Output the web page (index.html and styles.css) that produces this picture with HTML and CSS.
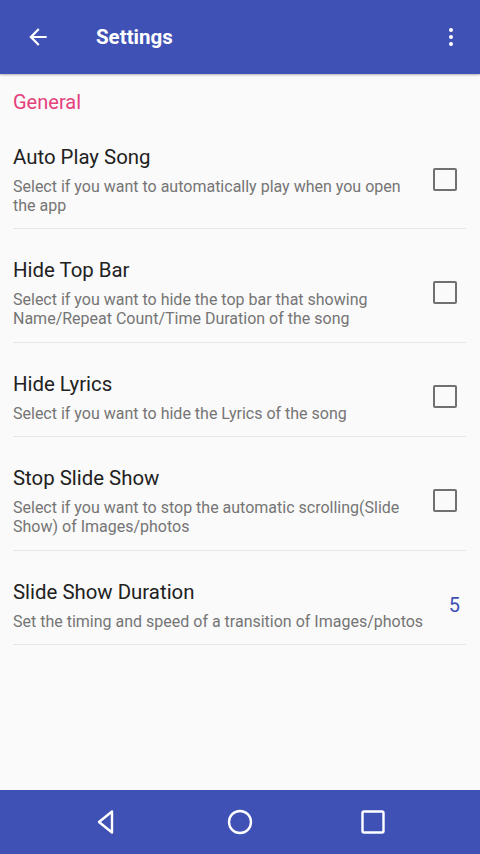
FILE: index.html
```html
<!DOCTYPE html>
<html lang="en">
<head>
  <meta charset="UTF-8">
  <title>Settings</title>
  <link rel="stylesheet" href="styles.css">
</head>
<body>
  <div class="screen">
    <!-- top bar -->
    <div class="toolbar">
      <svg class="back" width="24" height="24" viewBox="0 0 24 24">
        <path d="M20 11H7.83l5.59-5.59L12 4l-8 8 8 8 1.41-1.41L7.83 13H20v-2z" fill="#fff"/>
      </svg>
      <div class="toolbar-title">Settings</div>
      <svg class="more" width="24" height="24" viewBox="0 0 24 24">
        <circle cx="12" cy="5" r="2" fill="#fff"/>
        <circle cx="12" cy="12" r="2" fill="#fff"/>
        <circle cx="12" cy="19" r="2" fill="#fff"/>
      </svg>
    </div>

    <div class="content">
      <div class="category">General</div>

      <div class="pref">
        <div class="pref-text">
          <div class="pref-title">Auto Play Song</div>
          <div class="pref-summary">Select if you want to automatically play when you open the app</div>
        </div>
        <div class="pref-widget"><span class="checkbox"></span></div>
      </div>

      <div class="pref">
        <div class="pref-text">
          <div class="pref-title">Hide Top Bar</div>
          <div class="pref-summary">Select if you want to hide the top bar that showing Name/Repeat Count/Time Duration of the song</div>
        </div>
        <div class="pref-widget"><span class="checkbox"></span></div>
      </div>

      <div class="pref">
        <div class="pref-text">
          <div class="pref-title">Hide Lyrics</div>
          <div class="pref-summary">Select if you want to hide the Lyrics of the song</div>
        </div>
        <div class="pref-widget"><span class="checkbox"></span></div>
      </div>

      <div class="pref">
        <div class="pref-text">
          <div class="pref-title">Stop Slide Show</div>
          <div class="pref-summary">Select if you want to stop the automatic scrolling(Slide Show) of Images/photos</div>
        </div>
        <div class="pref-widget"><span class="checkbox"></span></div>
      </div>

      <div class="pref">
        <div class="pref-text">
          <div class="pref-title">Slide Show Duration</div>
          <div class="pref-summary">Set the timing and speed of a transition of Images/photos</div>
        </div>
        <div class="pref-value">5</div>
      </div>
    </div>

    <!-- navigation bar -->
    <div class="navbar">
      <svg width="28" height="28" viewBox="0 0 28 28">
        <path d="M19 3.5 L6 14 L19 24.5 Z" fill="none" stroke="#fff" stroke-width="2.4" stroke-linejoin="round"/>
      </svg>
      <svg width="28" height="28" viewBox="0 0 28 28">
        <circle cx="14" cy="14" r="11" fill="none" stroke="#fff" stroke-width="2.4"/>
      </svg>
      <svg width="28" height="28" viewBox="0 0 28 28">
        <rect x="3.5" y="3.5" width="21" height="21" rx="1.5" fill="none" stroke="#fff" stroke-width="2.4"/>
      </svg>
    </div>
  </div>
</body>
</html>
```

FILE: styles.css
```css
body {
  margin: 0;
  font-family: Roboto, "Noto Sans", sans-serif;
  background-color: #fafafa;
}
.screen {
  width: 480px;
  height: 854px;
  display: flex;
  flex-direction: column;
  overflow: hidden;
}

/* 顶部栏 */
.toolbar {
  height: 74px;
  flex-shrink: 0;
  background-color: #3f51b5;
  display: flex;
  align-items: center;
  padding: 0 17px 0 25px;
  box-shadow: 0 1px 2px rgba(0, 0, 0, 0.3);
  box-sizing: border-box;
}
.back {
  width: 26px;
  height: 26px;
}
.toolbar-title {
  margin-left: 45px;
  flex: 1;
  color: #fff;
  font-size: 20.5px;
  font-weight: bold;
}
.more {
  width: 24px;
  height: 24px;
}

.content {
  flex: 1;
  padding: 0 14px 0 13px;
}
.category {
  padding-top: 16px;
  height: 25.5px;
  line-height: 24px;
  color: #e5407a;
  font-size: 20px;
}

/* 设置项 */
.pref {
  display: flex;
  align-items: center;
  padding: 28px 0 13.6px;
  border-bottom: 1px solid #e6e6e6;
}
.pref-text {
  flex: 1;
}
.pref-title {
  font-size: 20.4px;
  line-height: 26px;
  color: #212121;
}
.pref-summary {
  margin-top: 7px;
  font-size: 16px;
  line-height: 19px;
  color: #757575;
}
.pref-widget {
  width: 46px;
  flex-shrink: 0;
  display: flex;
  justify-content: flex-end;
  padding-right: 9px;
  box-sizing: border-box;
}
.checkbox {
  width: 24px;
  height: 23px;
  border: 2.5px solid #707070;
  border-radius: 2px;
  box-sizing: border-box;
}
.pref-value {
  width: 24px;
  flex-shrink: 0;
  text-align: right;
  padding-right: 6px;
  box-sizing: border-box;
  font-size: 20px;
  color: #3f51b5;
}

/* 导航栏 */
.navbar {
  height: 64px;
  flex-shrink: 0;
  background-color: #3f51b5;
  display: flex;
  align-items: center;
  justify-content: center;
  gap: 105px;
}
```
